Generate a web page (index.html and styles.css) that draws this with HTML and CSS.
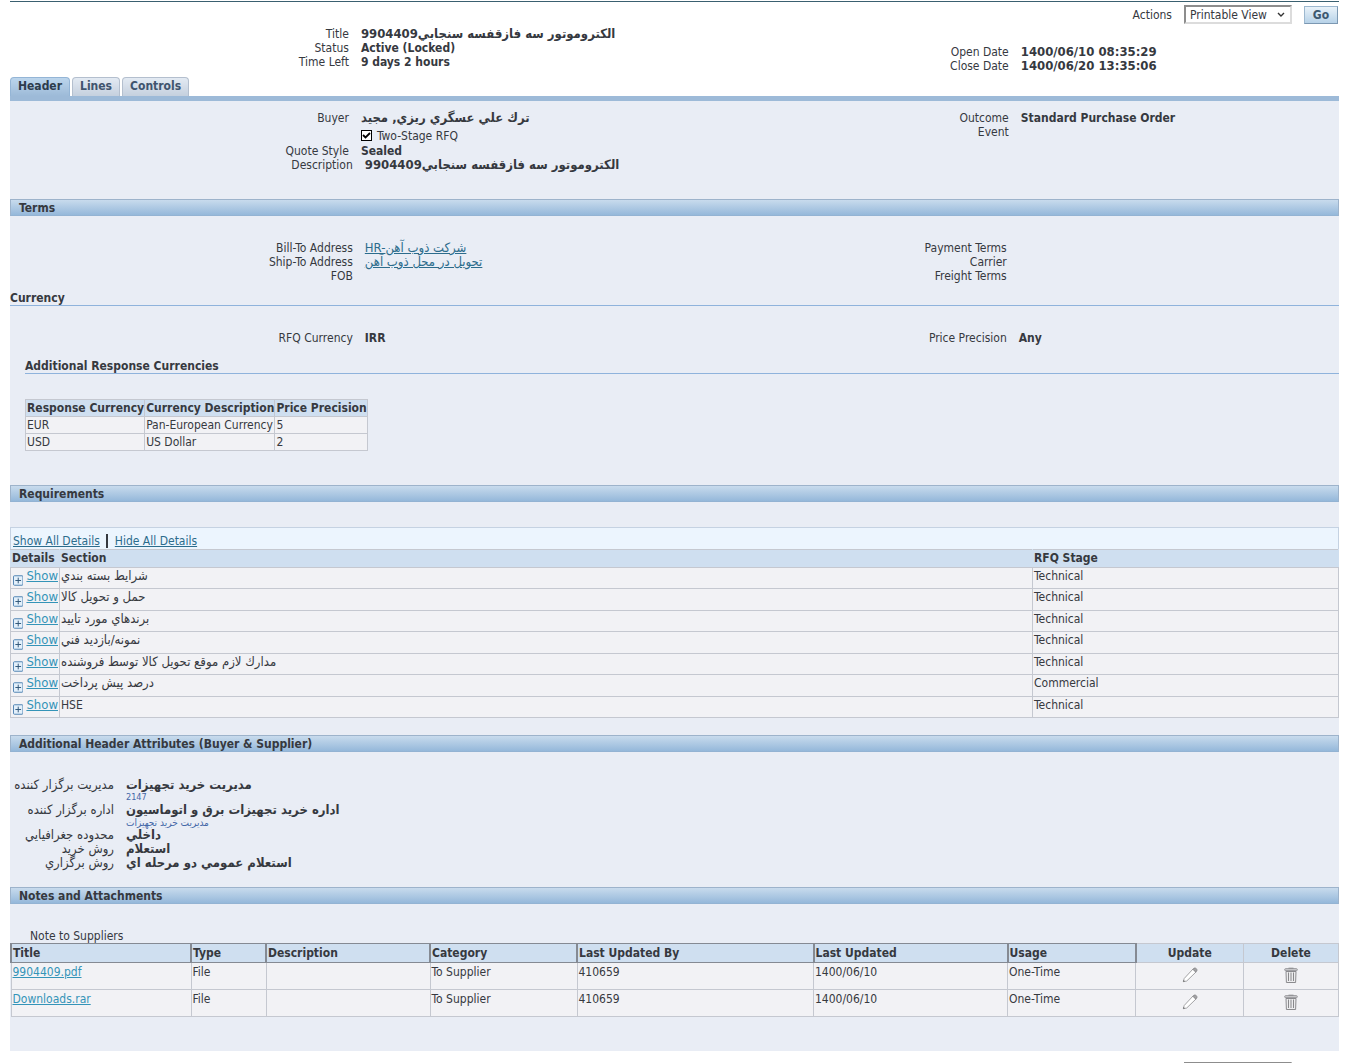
FILE: index.html
```
<!DOCTYPE html>
<html lang="en">
<head>
<meta charset="utf-8">
<title>RFQ 9904409</title>
<link rel="stylesheet" href="styles.css">
</head>
<body>
<svg class="defs" aria-hidden="true">
  <symbol id="plus" viewBox="0 0 11 11">
    <rect x=".5" y=".5" width="10" height="10" rx="1" fill="#e3f0fb" stroke="#4a7fb0"/>
    <path d="M2.500 5.500h6M5.500 2.500v6" stroke="#2d5578" fill="none"/>
  </symbol>
  <symbol id="pencil" viewBox="0 0 16 16">
    <path d="M1.300 14.700l.9-3.200L11 2l3 3-9.300 9z" fill="#fff" stroke="#98989b" stroke-width=".9" stroke-linejoin="round"/>
    <path d="M10.800 2.300l1.200-1.200c1.500-.8 3.700 1.200 2.900 2.800l-1.200 1.300z" fill="#a2a2a5" stroke="#808083" stroke-width=".7"/>
    <path d="M1.200 14.800l.5-1.700 1.200 1.200z" fill="#555"/>
  </symbol>
  <symbol id="bin" viewBox="0 0 14 16">
    <path d="M2 4.500h10l-.4 11H2.400z" fill="#ececee" stroke="#8b8b8e"/>
    <rect x=".7" y="1.700" width="12.600" height="2" rx=".9" fill="#d3d3d5" stroke="#8b8b8e" stroke-width=".9"/>
    <path d="M4.500 1.200h5" stroke="#8b8b8e"/>
    <path d="M4.500 5.500v8.500M7 5.500v8.500M9.500 5.500v8.500" stroke="#88888b"/>
  </symbol>
</svg>
<main class="page">
  <form class="actions">
    <label for="act-top">Actions</label>
    <select id="act-top" class="picker"><option>Printable View</option></select>
    <button class="go" type="button">Go</button>
  </form>

  <div class="pair summary">
    <dl class="fields left">
      <dt>Title</dt><dd class="wide">9904409الكتروموتور سه فازقفسه سنجابي</dd>
      <dt>Status</dt><dd>Active (Locked)</dd>
      <dt>Time Left</dt><dd>9 days 2 hours</dd>
    </dl>
    <dl class="fields right dates">
      <dt>Open Date</dt><dd class="wide">1400/06/10 08:35:29</dd>
      <dt>Close Date</dt><dd class="wide">1400/06/20 13:35:06</dd>
    </dl>
  </div>

  <nav class="tabs">
    <a class="tab current" href="#header">Header</a>
    <a class="tab" href="#lines">Lines</a>
    <a class="tab" href="#controls">Controls</a>
  </nav>

  <div class="panel">
    <section class="overview">
      <div class="pair">
        <dl class="fields left">
          <dt>Buyer</dt><dd class="wide">ترك علي عسگري ريزي, مجيد</dd>
          <dt></dt><dd class="check"><input type="checkbox" id="two-stage" checked><label for="two-stage">Two-Stage RFQ</label></dd>
          <dt>Quote Style</dt><dd>Sealed</dd>
        </dl>
        <dl class="fields right">
          <dt>Outcome</dt><dd>Standard Purchase Order</dd>
          <dt>Event</dt><dd></dd>
        </dl>
      </div>
      <div class="pair inset">
        <dl class="fields left">
          <dt>Description</dt><dd class="wide">9904409الكتروموتور سه فازقفسه سنجابي</dd>
        </dl>
      </div>
    </section>

    <h2 class="bar">Terms</h2>
    <section class="terms">
      <div class="pair inset">
        <dl class="fields left">
          <dt>Bill-To Address</dt><dd><a class="address" href="#bill-to">HR-شركت ذوب آهن</a></dd>
          <dt>Ship-To Address</dt><dd><a class="address" href="#ship-to">تحويل در محل ذوب آهن</a></dd>
          <dt>FOB</dt><dd></dd>
        </dl>
        <dl class="fields right">
          <dt>Payment Terms</dt><dd></dd>
          <dt>Carrier</dt><dd></dd>
          <dt>Freight Terms</dt><dd></dd>
        </dl>
      </div>
      <h3 class="rule">Currency</h3>
      <div class="pair inset currency">
        <dl class="fields left"><dt>RFQ Currency</dt><dd>IRR</dd></dl>
        <dl class="fields right"><dt>Price Precision</dt><dd>Any</dd></dl>
      </div>
      <div class="nested">
        <h4 class="rule">Additional Response Currencies</h4>
        <table class="grid currencies">
          <thead><tr><th>Response Currency</th><th>Currency Description</th><th>Price Precision</th></tr></thead>
          <tbody>
            <tr><td>EUR</td><td>Pan-European Currency</td><td>5</td></tr>
            <tr><td>USD</td><td>US Dollar</td><td>2</td></tr>
          </tbody>
        </table>
      </div>
    </section>

    <h2 class="bar">Requirements</h2>
    <section class="requirements">
      <div class="toggles"><a href="#show-all">Show All Details</a><span class="divider"></span><a href="#hide-all">Hide All Details</a></div>
      <table class="grid sections">
        <thead><tr><th class="c-details">Details</th><th>Section</th><th class="c-stage">RFQ Stage</th></tr></thead>
        <tbody>
          <tr><td><a class="show" href="#s1"><svg><use href="#plus"/></svg><span>Show</span></a></td><td class="fa">شرايط بسته بندي</td><td>Technical</td></tr>
          <tr><td><a class="show" href="#s2"><svg><use href="#plus"/></svg><span>Show</span></a></td><td class="fa">حمل و تحويل كالا</td><td>Technical</td></tr>
          <tr><td><a class="show" href="#s3"><svg><use href="#plus"/></svg><span>Show</span></a></td><td class="fa">برندهاي مورد تاييد</td><td>Technical</td></tr>
          <tr><td><a class="show" href="#s4"><svg><use href="#plus"/></svg><span>Show</span></a></td><td class="fa">نمونه/بازديد فني</td><td>Technical</td></tr>
          <tr><td><a class="show" href="#s5"><svg><use href="#plus"/></svg><span>Show</span></a></td><td class="fa">مدارك لازم موقع تحويل كالا توسط فروشنده</td><td>Technical</td></tr>
          <tr><td><a class="show" href="#s6"><svg><use href="#plus"/></svg><span>Show</span></a></td><td class="fa">درصد پيش پرداخت</td><td>Commercial</td></tr>
          <tr><td><a class="show" href="#s7"><svg><use href="#plus"/></svg><span>Show</span></a></td><td>HSE</td><td>Technical</td></tr>
        </tbody>
      </table>
    </section>

    <h2 class="bar">Additional Header Attributes (Buyer &amp; Supplier)</h2>
    <section class="attributes">
      <dl class="fields">
        <dt>مديريت برگزار كننده</dt><dd>مديريت خريد تجهيزات<small>2147</small></dd>
        <dt>اداره برگزار كننده</dt><dd>اداره خريد تجهيزات برق و اتوماسيون<small class="fa">مديريت خريد تجهيزات</small></dd>
        <dt>محدوده جغرافيايي</dt><dd>داخلي</dd>
        <dt>روش خريد</dt><dd>استعلام</dd>
        <dt>روش برگزاري</dt><dd>استعلام عمومي دو مرحله اي</dd>
      </dl>
    </section>

    <h2 class="bar">Notes and Attachments</h2>
    <section class="notes">
      <p class="caption">Note to Suppliers</p>
      <table class="grid files">
        <colgroup><col class="w-title"><col class="w-type"><col class="w-desc"><col class="w-cat"><col><col class="w-on"><col class="w-usage"><col class="w-update"><col class="w-delete"></colgroup>
        <thead><tr><th class="sort">Title</th><th class="sort">Type</th><th class="sort">Description</th><th class="sort">Category</th><th class="sort">Last Updated By</th><th class="sort">Last Updated</th><th class="sort last">Usage</th><th class="mid">Update</th><th class="mid">Delete</th></tr></thead>
        <tbody>
          <tr><td><a href="#f1">9904409.pdf</a></td><td>File</td><td></td><td>To Supplier</td><td>410659</td><td>1400/06/10</td><td>One-Time</td>
            <td class="mid"><button class="icon" type="button" aria-label="Update"><svg width="16" height="16"><use href="#pencil"/></svg></button></td>
            <td class="mid"><button class="icon" type="button" aria-label="Delete"><svg width="14" height="16"><use href="#bin"/></svg></button></td></tr>
          <tr><td><a href="#f2">Downloads.rar</a></td><td>File</td><td></td><td>To Supplier</td><td>410659</td><td>1400/06/10</td><td>One-Time</td>
            <td class="mid"><button class="icon" type="button" aria-label="Update"><svg width="16" height="16"><use href="#pencil"/></svg></button></td>
            <td class="mid"><button class="icon" type="button" aria-label="Delete"><svg width="14" height="16"><use href="#bin"/></svg></button></td></tr>
        </tbody>
      </table>
    </section>
  </div>

  <form class="actions lower">
    <select class="picker" aria-label="Actions"><option>Printable View</option></select>
    <button class="go" type="button">Go</button>
  </form>
</main>
</body>
</html>
```
FILE: styles.css
```
* { box-sizing: border-box; }
body {
  margin: 0;
  background: #fff;
  color: #36393f;
  font: 12px/14px "DejaVu Sans Condensed", "DejaVu Sans", sans-serif;
}
h2, h3, h4, p, dl, dd { margin: 0; font-size: 12px; }
a { color: #2c6c8c; }
.defs { display: none; }
.page { margin: 1px 9px 0 10px; border-top: 1px solid #3a6070; }
.fields .wide { font-size: 13px; }

/* action bar */
.actions { display: flex; align-items: center; justify-content: flex-end; padding: 3px 1px 0 0; }
.picker {
  width: 108px;
  height: 19px;
  margin: 0 12px;
  padding: 0 4px;
  border: 2px solid #dcdcdc;
  border-top-color: #8d8d8d;
  border-left-color: #8d8d8d;
  appearance: none;
  background: #fff url("data:image/svg+xml,%3Csvg xmlns='http://www.w3.org/2000/svg' width='8' height='6'%3E%3Cpath d='M1 1l3 3 3-3' fill='none' stroke='%23333' stroke-width='1.400'/%3E%3C/svg%3E") no-repeat right 5px center;
  color: inherit;
  font: inherit;
}
.go {
  width: 34px;
  height: 18px;
  padding: 0;
  border: 1px solid #9db8cf;
  border-right-color: #7c98b2;
  border-bottom-color: #7c98b2;
  background: linear-gradient(#e9f2f9, #b7d2e8);
  color: #3d5870;
  font: bold 12px/14px "DejaVu Sans Condensed", sans-serif;
}
.lower { align-items: flex-end; padding-top: 11px; }

/* label / value columns */
.pair { display: grid; grid-template-columns: 1fr 1fr; align-items: start; }
.fields { display: grid; column-gap: 12px; grid-auto-rows: minmax(14px, auto); }
.fields.left { grid-template-columns: 51% 1fr; }
.fields.right { grid-template-columns: 50% 1fr; padding-left: 4px; }
.inset .fields.left { padding-left: 8px; }
.inset .fields.right { padding-left: 0; }
.fields dt { text-align: right; }
.fields dd { font-weight: bold; white-space: nowrap; }
.summary { padding: 3px 0 4px; }
.dates { padding-top: 18px; }

/* tabs */
.tabs { display: flex; gap: 2px; border-bottom: 5px solid #9dbad8; }
.tab {
  height: 19px;
  padding: 1px 7px 0;
  border: 1px solid #b4bfce;
  border-bottom: 0;
  border-radius: 4px 4px 0 0;
  background: linear-gradient(#e3eaf3, #c5d0de);
  color: #40546e;
  font-weight: bold;
  text-decoration: none;
}
.tab.current { border-color: #94b5d6; background: linear-gradient(#bcd5ec, #9dbad8); color: #2d3b4c; }

/* panel */
.panel { padding-bottom: 34px; background: #e9edf5; }
.bar {
  height: 17px;
  padding: 1px 8px 0;
  border: 1px solid #9db3cb;
  border-bottom-color: #93b3d3;
  background: linear-gradient(#c8dbed, #95b8da);
  line-height: 14px;
}
.overview { padding: 10px 0 27px; }
.check { display: flex; align-items: center; height: 19px; padding-top: 2px; }
.fields .check { font-weight: normal; }
.check input {
  width: 11px;
  height: 11px;
  margin: 0 5px 0 0;
  border: 1px solid #000;
  appearance: none;
  background: #fff url("data:image/svg+xml,%3Csvg xmlns='http://www.w3.org/2000/svg' width='9' height='9'%3E%3Cpath d='M1 4l2.500 2.500L8 2' fill='none' stroke='%23000' stroke-width='1.800'/%3E%3C/svg%3E") center;
}
.terms { padding: 25px 0 34px; }
.fields .address { font-size: 13px; font-weight: normal; }
.rule { margin-top: 8px; border-bottom: 1px solid #8fb3dc; }
.currency { padding: 25px 0 6px; }
.nested { padding-left: 15px; }

/* data tables */
.grid { border-collapse: collapse; }
.grid th, .grid td { height: 17px; padding: 1px; border: 1px solid #c5c8d0; text-align: left; vertical-align: top; }
.grid th { background: #cfdff0; white-space: nowrap; }
.grid td { background: #f2f2f5; }
.grid td a { color: #3494b8; }
.currencies { width: 342px; margin-top: 25px; }
.currencies th { padding-right: 0; }

.requirements { padding: 25px 0 17px; }
.toggles { display: flex; align-items: center; height: 22px; padding: 4px 2px 0; border: 1px solid #c5d2e2; border-bottom: 0; background: #ecf5fe; }
.divider { width: 2px; height: 14px; margin: 0 7px 0 6px; background: #36393f; }
.sections { width: 100%; table-layout: fixed; }
.sections th { height: 18px; border-left-color: #cfdff0; border-right-color: #cfdff0; }
.sections td { height: 21px; }
.sections tr:nth-child(even) td { height: 22px; }
.c-details { width: 49px; }
.c-stage { width: 306px; }
.sections .fa { font-size: 13px; }
.show { display: flex; gap: 3px; padding-left: 1px; font-size: 13px; }
.show svg { width: 11px; height: 11px; margin-top: 6px; }

/* attributes */
.attributes { padding: 26px 0 17px; }
.attributes .fields { grid-template-columns: 104px 1fr; font-size: 13px; }
.attributes dd { font-size: 13px; }
.attributes small { display: block; color: #4468a8; font-size: 9px; font-weight: normal; line-height: 11px; }
.attributes .fa { font-size: 10px; }

/* notes */
.notes { padding-top: 25px; }
.caption { padding-left: 20px; }
.files { width: 100%; table-layout: fixed; }
.files th { height: 19px; padding: 2px 1px; }
.files td { height: 27px; padding: 2px 1px; }
.files .sort { border-color: #858a93; border-left-width: 2px; }
.files .last { border-right-width: 2px; }
.files .mid { text-align: center; }
.icon { display: inline-flex; margin: 2px 0 0; padding: 0; border: 0; background: none; }
.w-title { width: 180px; }
.w-type { width: 75px; }
.w-desc { width: 164px; }
.w-cat { width: 147px; }
.w-on { width: 194px; }
.w-usage { width: 128px; }
.w-update { width: 108px; }
.w-delete { width: 95px; }
```
